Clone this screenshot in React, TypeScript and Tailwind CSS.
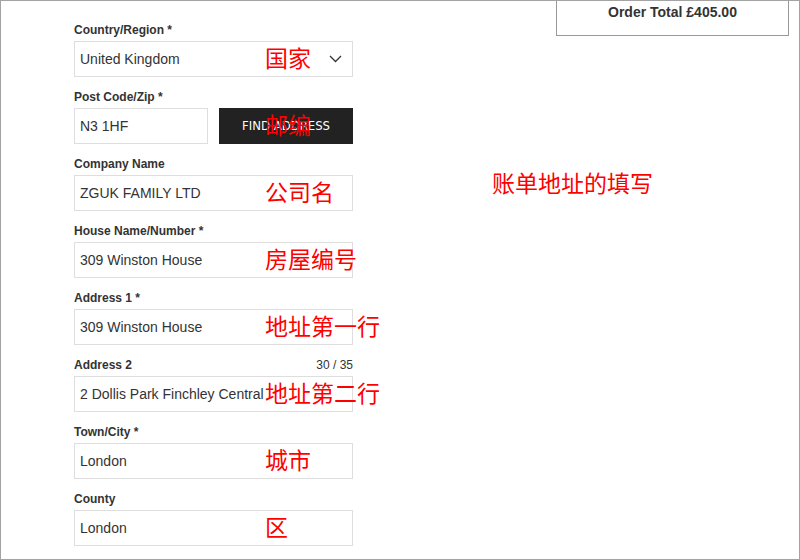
import React from "react";

const sans = "font-['Liberation_Sans',Arial,sans-serif]";
const cjk = "font-['Noto_Sans_CJK_SC','Noto_Sans',sans-serif]";

type Field = {
  label: string;
  value: string;
  note: string;
  counter?: string;
  select?: boolean;
};

const fields: Field[] = [
  { label: "Company Name", value: "ZGUK FAMILY LTD", note: "公司名" },
  { label: "House Name/Number *", value: "309 Winston House", note: "房屋编号" },
  { label: "Address 1 *", value: "309 Winston House", note: "地址第一行" },
  {
    label: "Address 2",
    value: "2 Dollis Park Finchley Central",
    note: "地址第二行",
    counter: "30 / 35",
  },
  { label: "Town/City *", value: "London", note: "城市" },
  { label: "County", value: "London", note: "区" },
];

function Note({ text }: { text: string }) {
  return (
    <span
      className={`absolute left-[190px] top-[calc(50%-2px)] -translate-y-1/2 text-[23px] leading-none text-[#ff0000] whitespace-nowrap pointer-events-none ${cjk}`}
    >
      {text}
    </span>
  );
}

function Label({ text, counter }: { text: string; counter?: string }) {
  return (
    <div className="flex items-center justify-between h-[17px] mb-[3px] pt-[1px]">
      <span className="text-[12px] font-bold text-[#333]">{text}</span>
      {counter && <span className="text-[12px] text-[#333]">{counter}</span>}
    </div>
  );
}

function Input({ value, note, select }: { value: string; note: string; select?: boolean }) {
  return (
    <div className="relative h-[36px] border border-[#dedede] bg-white flex items-center pl-[5px] pr-[10px]">
      <span className="text-[14px] text-[#333] whitespace-nowrap">{value}</span>
      {select && (
        <svg className="ml-auto" width="13" height="8" viewBox="0 0 13 8" fill="none">
          <polyline points="1,1 6.5,6.5 12,1" stroke="#333" strokeWidth="1.3" />
        </svg>
      )}
      <Note text={note} />
    </div>
  );
}

export default function App() {
  return (
    <div
      className={`relative w-[800px] h-[560px] overflow-hidden border border-[#a3a3a3] bg-white flex ${sans}`}
    >
      {/* address form */}
      <div className="w-[279px] ml-[73px] pt-[20px] flex flex-col">
        <div className="mb-[11px]">
          <Label text="Country/Region *" />
          <Input value="United Kingdom" note="国家" select />
        </div>

        <div className="mb-[11px]">
          <Label text="Post Code/Zip *" />
          <div className="flex gap-[11px]">
            <div className="relative w-[134px] h-[36px] border border-[#dedede] flex items-center pl-[5px]">
              <span className="text-[14px] text-[#333]">N3 1HF</span>
            </div>
            <div className="relative flex-1 h-[36px] bg-[#222] flex items-center justify-center">
              <span className="text-[13px] text-white font-['Liberation_Sans_Narrow','DejaVu_Sans_Condensed',sans-serif]">
                FIND ADDRESS
              </span>
              <span
                className={`absolute left-[46px] top-[calc(50%-2px)] -translate-y-1/2 text-[23px] leading-none text-[#ff0000] ${cjk}`}
              >
                邮编
              </span>
            </div>
          </div>
        </div>

        {fields.map((f) => (
          <div key={f.label + f.value} className="mb-[11px]">
            <Label text={f.label} counter={f.counter} />
            <Input value={f.value} note={f.note} />
          </div>
        ))}
      </div>

      {/* summary side */}
      <div className="flex-1 flex justify-end pr-[10px]">
        <div className="w-[233px] h-[35px] border-x border-b border-[#999] flex justify-center pt-[3px]">
          <span className="text-[14px] font-bold text-[#333] leading-[16px]">
            Order Total £405.00
          </span>
        </div>
      </div>

      <span
        className={`absolute left-[491px] top-[170px] text-[23px] leading-none text-[#ff0000] whitespace-nowrap ${cjk}`}
      >
        账单地址的填写
      </span>
    </div>
  );
}
